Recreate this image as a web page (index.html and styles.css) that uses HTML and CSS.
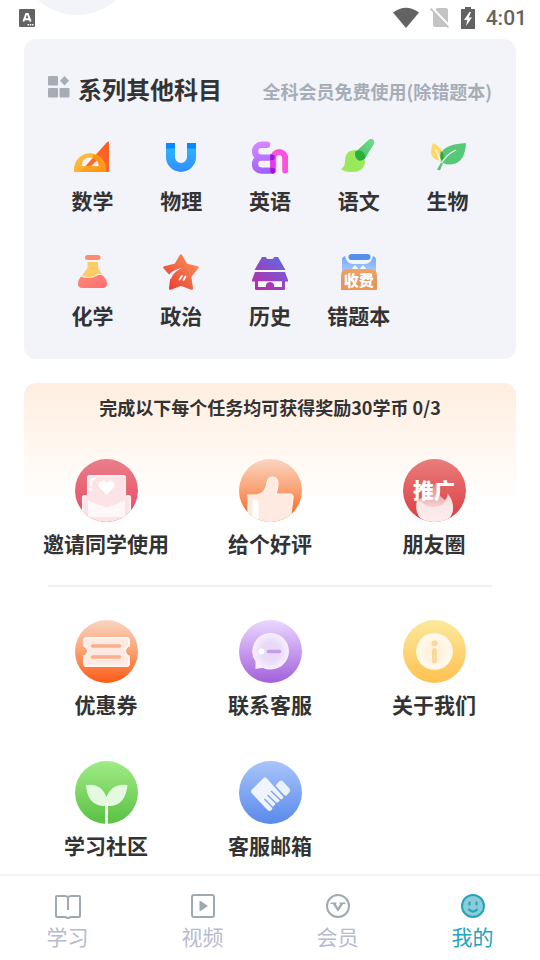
FILE: index.html
```html
<!DOCTYPE html>
<html lang="zh-CN">
<head>
    <meta charset="UTF-8">
    <meta name="viewport" content="width=device-width, initial-scale=1">
    <title>我的</title>
    <link rel="stylesheet" href="styles.css">
</head>
<body>
<div class="page">
    <div class="avatar"></div>
    <header class="status">
        <svg width="16" height="18" viewBox="0 0 16 18">
            <rect width="16" height="18" rx="1" fill="#636363"/>
            <path d="M4.4 12.5L7.2 5h1.6l2.8 7.5M5.7 10.2h4.6" fill="none" stroke="#fff" stroke-width="2"/>
            <path d="M8.500 15.700h6" stroke="#fff" stroke-width="1.500" stroke-dasharray="1.500 .8"/>
        </svg>
        <div class="status-right">
            <svg width="26" height="22" viewBox="0 0 26 22"><path d="M0 5.500Q13-4 26 5.500L13 21z" fill="#636363"/></svg>
            <svg width="20" height="22" viewBox="0 0 20 22">
                <path d="M7 1h9q2 0 2 2v15q0 2-2 2H5q-2 0-2-2V5z" fill="#c4c4c4"/>
                <path d="M2 .5l18 19" stroke="#fff" stroke-width="2"/>
                <path d="M.5 1.500l18 19" stroke="#c4c4c4" stroke-width="1.800"/>
            </svg>
            <svg width="14" height="22" viewBox="0 0 14 22">
                <path d="M4 0h6v2h4v20H0V2h4z" fill="#636363"/>
                <path d="M8.500 5L3 13h3.300L5 19l6-8.500H7.700L10 5z" fill="#fff"/>
            </svg>
            <span class="time">4:01</span>
        </div>
    </header>

    <section class="subjects">
        <div class="subjects-head">
            <svg width="22" height="22" viewBox="0 0 22 22" fill="#a6adb7">
                <rect width="10" height="9.500" rx="1"/>
                <rect y="12" width="10" height="9.500" rx="1"/>
                <rect x="11.500" y="12" width="10" height="9.500" rx="1"/>
                <path d="M16.500 0L21 4.700 16.500 9.500 12 4.700z"/>
            </svg>
            <h2>系列其他科目</h2>
            <p>全科会员免费使用(除错题本)</p>
        </div>
        <nav class="subject-list">
            <a href="#">
                <svg class="icon" viewBox="0 0 36 36">
                    <defs>
                        <linearGradient id="tri" x1="0" y1="1" x2="1" y2="0"><stop offset="0" stop-color="#ff7433"/><stop offset="1" stop-color="#ff5b20"/></linearGradient>
                        <linearGradient id="pro" x1="0" y1="0" x2="1" y2="1"><stop offset="0" stop-color="#ffc12e"/><stop offset="1" stop-color="#ff9513"/></linearGradient>
                    </defs>
                    <path d="M35 4v28q0 1-1 1H6L33 3.200q2-1.500 2 .8zM25 19.500L16 28h10z" fill="url(#tri)" fill-rule="evenodd"/>
                    <path d="M0 30q0-6 4.600-11a15.800 15.800 0 0 1 22.700 0Q32 24 32 30v2q0 1-1 1H1q-1 0-1-1zM7.500 27H25q-1-8.500-9-8.500T7.500 27z" fill="url(#pro)" fill-opacity=".92" fill-rule="evenodd"/>
                    <path d="M19 15.500q6 1 9 8.500l-3 3q0-6-6-8z" fill="#ff9212"/>
                </svg>
                <span>数学</span>
            </a>
            <a href="#">
                <svg class="icon" viewBox="0 0 36 36">
                    <defs><linearGradient id="mag" x1="0" y1="0" x2="0" y2="1"><stop offset="0" stop-color="#2bbcff"/><stop offset="1" stop-color="#338dff"/></linearGradient></defs>
                    <path d="M3 4h9v14a6 6 0 0 0 12 0V4h9v14a15 15 0 0 1-30 0z" fill="url(#mag)"/>
                    <path d="M3 4h9v5.500H3zM24 4h9v5.500h-9z" fill="#078aff"/>
                </svg>
                <span>物理</span>
            </a>
            <a href="#">
                <svg class="icon" viewBox="0 0 36 36">
                    <defs><linearGradient id="ee" gradientUnits="userSpaceOnUse" x1="8" y1="3" x2="16" y2="35"><stop offset="0" stop-color="#d78aff"/><stop offset="1" stop-color="#9c5cff"/></linearGradient></defs>
                    <path d="M15 5.800H9.500a6.200 6.200 0 0 0 0 12.800H19.500H9.500a6.500 6.500 0 0 0 0 13H19.500" fill="none" stroke="url(#ee)" stroke-width="6.400" stroke-linecap="round" stroke-linejoin="round"/>
                    <path d="M21.200 31.500V19a6 6 0 0 1 12 0v12.500" fill="none" stroke="#ff52dc" stroke-width="6" stroke-linecap="round"/>
                    <path d="M18.200 15.500h1.600q3 0 3 3t-3 3h-1.600zM18.200 28.500h2q3 0 3 3t-3 3.200q-2-1-2-3z" fill="#9517e0"/>
                    <path d="M18.200 21.500h5v7h-5z" fill="#dc3df0"/>
                </svg>
                <span>英语</span>
            </a>
            <a href="#">
                <svg class="icon" viewBox="0 0 36 36">
                    <defs><linearGradient id="pen" x1="1" y1="0" x2="0" y2="1"><stop offset="0" stop-color="#71dd8c"/><stop offset="1" stop-color="#48bd6c"/></linearGradient></defs>
                    <path d="M0 30Q4 28 4 22q0-11 11-11 9 3 9 12-1 10-13 10-8 0-11-3z" fill="#9be85c"/>
                    <path d="M14.500 13L27.500 1q2-1.500 4.500-.8 2 1.500.8 5L24 19.500q-3 3-7 1.500-4-3-2.500-8z" fill="url(#pen)"/>
                    <path d="M14.500 12.500q5-2.500 8 1 2.500 3 1.500 6-3 3-7 1.500-4-3-2.500-8.500z" fill="#2bae3c"/>
                </svg>
                <span>语文</span>
            </a>
            <a href="#">
                <svg class="icon" viewBox="0 0 36 36">
                    <path d="M3 4q10 5 10 13l-3 5Q1 20 1 13q0-4 2-9z" fill="#ffd866"/>
                    <path d="M36 4q-1 21-16 21.500-4 0-7-1.500l-3 7.500-3-1 4-7q-5-18 25-19.500z" fill="#57c878"/>
                    <path d="M11 12q3 2 2.500 8l-2 1q-2-4-.5-9z" fill="#28a72d"/>
                    <path d="M26 11q-9 4-14.500 13M5.500 11q3 4 4.500 11" fill="none" stroke="#f3f4f9" stroke-width="1.300"/>
                </svg>
                <span>生物</span>
            </a>
            <a href="#">
                <svg class="icon" viewBox="0 0 36 36">
                    <defs><linearGradient id="fl" x1="0" y1="0" x2="1" y2="1"><stop offset="0" stop-color="#ff8d75"/><stop offset="1" stop-color="#ff6b70"/></linearGradient></defs>
                    <rect x="11" y="1" width="15.500" height="5" rx="2.500" fill="#ff8c72"/>
                    <path d="M13.500 8h10.500v6l4 6q-4-1-8 2t-12-.5l5.500-7.500z" fill="#ffcb69"/>
                    <path d="M7 22.500q8 3 14 0 5-3 8-.8 4 4 4 8 0 4.300-4.500 4.300h-20Q4 34 4 29.500q0-4 3-7z" fill="url(#fl)"/>
                </svg>
                <span>化学</span>
            </a>
            <a href="#">
                <svg class="icon" viewBox="0 0 36 36">
                    <defs><linearGradient id="st" x1="1" y1="0" x2="0" y2="1"><stop offset="0" stop-color="#f99a5c"/><stop offset="1" stop-color="#ea3730"/></linearGradient></defs>
                    <path d="M18 1.500l5.300 9.300 11.200 2.700-7.500 9 1.800 12L18 30.500 7.200 34.500 8.800 22 1.500 13.500l11-2.700z" fill="url(#st)" stroke="url(#st)" stroke-width="2.500" stroke-linejoin="round"/>
                    <path d="M4 22.500q6-7.500 15-8.500-8.500 3.500-11 11z" fill="#f3f4f9"/>
                    <path d="M19 22l-2.500 3.500M22.500 22.500L20.500 26" stroke="#fff" stroke-width="1.800" stroke-linecap="round"/>
                </svg>
                <span>政治</span>
            </a>
            <a href="#">
                <svg class="icon" viewBox="0 0 36 36">
                    <defs><linearGradient id="ho" gradientUnits="userSpaceOnUse" x1="30" y1="2" x2="8" y2="36"><stop offset="0" stop-color="#5d6be3"/><stop offset="1" stop-color="#bd2ba8"/></linearGradient></defs>
                    <path d="M10 3h4q0 2 2 2h4q2 0 2-2h4l7.500 13h-31zM3 18h30l3 8v1.500H33V35q0 1-1 1H4q-1 0-1-1v-7.500H0V26zM6 27.500v5.500h7.500q0-5 4.500-5t4.500 5H30v-5.500z" fill="url(#ho)" fill-rule="evenodd"/>
                    <path d="M8 17.200h20" stroke="#fff" stroke-width="1.200"/>
                    <path d="M6 27.500h24V33h-7.500q0-5-4.500-5t-4.500 5H6z" fill="#f7f7fb"/>
                </svg>
                <span>历史</span>
            </a>
            <a href="#">
                <div class="paid">
                    <svg class="icon" viewBox="0 0 36 36">
                        <defs>
                            <linearGradient id="cb" x1="0" y1="0" x2="0" y2="1"><stop offset="0" stop-color="#73a8fb"/><stop offset="1" stop-color="#bcd4ff"/></linearGradient>
                            <linearGradient id="fee" x1="0" y1="0" x2="0" y2="1"><stop offset="0" stop-color="#f3a15e"/><stop offset=".5" stop-color="#e19a65"/><stop offset="1" stop-color="#ed954e"/></linearGradient>
                        </defs>
                        <path d="M1 5q0-2 3-3 2 8 8 8h12q6 0 8-8 3 1 3 3v19H1z" fill="url(#cb)"/>
                        <rect x="7.500" y="0" width="22" height="6" rx="3" fill="#5491eb"/>
                        <path d="M12 16l2-2.500 2 2.500M20 16l2-2.500 2 2.500" stroke="#fff" stroke-width="3" fill="none"/>
                        <path d="M0 36V22q0-7 7-7h22q7 0 7 7v14z" fill="url(#fee)"/>
                    </svg>
                    <b>收费</b>
                </div>
                <span>错题本</span>
            </a>
        </nav>
    </section>

    <main class="tasks">
        <p class="reward">完成以下每个任务均可获得奖励30学币 0/3</p>
        <div class="task-list">
            <a href="#">
                <svg class="badge" viewBox="0 0 63 63">
                    <defs>
                        <linearGradient id="g1" x1="0" y1="0" x2="0" y2="1"><stop offset="0" stop-color="#e97f8b"/><stop offset="1" stop-color="#e94560"/></linearGradient>
                        <clipPath id="round"><circle cx="31.500" cy="31.500" r="31.500"/></clipPath>
                    </defs>
                    <g clip-path="url(#round)">
                        <rect width="63" height="63" fill="url(#g1)"/>
                        <path d="M12 36V19q0-3 3-3h33q3 0 3 3v17h2q3 0 3 3v24H7V39q0-3 3-3z" fill="#fbe3e6"/>
                        <path d="M12.700 36V19q0-2.300 2.500-2.300h32.600q2.500 0 2.500 2.300v17M7.700 62V39q0-2.300 2.300-2.300h2.500M50.500 36.700h2.500q2.300 0 2.300 2.300v24" fill="none" stroke="#fff2f4" stroke-width="1.500"/>
                        <path d="M16 26v-3q0-3.500 4-3.500" fill="none" stroke="#fff" stroke-width="2" stroke-linecap="round"/>
                        <circle cx="16" cy="30.500" r="1.400" fill="#fff"/>
                        <path d="M31.600 35.500L25 29q-3-3.500 0-6.200 3.500-2.300 6.600.8 3-3.100 6.600-.8 3 2.700 0 6.200z" fill="#fff"/>
                        <path d="M13 41.500q9 4 18.600 7 9.500-3 18.400-7V58H13z" fill="#fff7f8"/>
                    </g>
                </svg>
                <span>邀请同学使用</span>
            </a>
            <a href="#">
                <svg class="badge" viewBox="0 0 63 63">
                    <defs><linearGradient id="g2" x1="0" y1="0" x2="0" y2="1"><stop offset="0" stop-color="#f9d5c2"/><stop offset=".45" stop-color="#fba67a"/><stop offset="1" stop-color="#fa5b13"/></linearGradient></defs>
                    <g clip-path="url(#round)">
                        <rect width="63" height="63" fill="url(#g2)"/>
                        <path d="M9 36h9q9-2 10-12 .5-6 5.500-6 5.500 0 5.500 7-.5 6-2 10h14q3.500 0 3 4l-3 24H9z" fill="#feeae1" stroke="#fff7f3" stroke-width="1.200"/>
                        <rect x="13.500" y="41" width="6" height="24" rx="2" fill="#fff"/>
                    </g>
                </svg>
                <span>给个好评</span>
            </a>
            <a href="#">
                <div class="promo">
                    <svg class="badge" viewBox="0 0 63 63">
                        <defs>
                            <linearGradient id="g3" x1="0" y1="0" x2="0" y2="1"><stop offset="0" stop-color="#e97d7c"/><stop offset="1" stop-color="#dc3c40"/></linearGradient>
                            <linearGradient id="fire" x1="0" y1="0" x2="0" y2="1"><stop offset="0" stop-color="#e77c7c"/><stop offset=".65" stop-color="#f5d5d6"/><stop offset="1" stop-color="#ffeeee"/></linearGradient>
                        </defs>
                        <g clip-path="url(#round)">
                            <rect width="63" height="63" fill="url(#g3)"/>
                            <path d="M14 41q8-3 13-9 4-4 6-9 4 6 4 14l5 4q3-3 2.500-7 5.500 6 5.500 15 0 14-18 14T13 48q0-4 1-7z" fill="url(#fire)"/>
                            <path d="M14 43q3-3 8 3 12 6 21-4l2-6q5 6 5 13 0 14-18 14T14 50z" fill="#fbecec" fill-opacity=".8"/>
                        </g>
                    </svg>
                    <b>推广</b>
                </div>
                <span>朋友圈</span>
            </a>
        </div>
        <hr>
        <div class="task-list">
            <a href="#">
                <svg class="badge" viewBox="0 0 63 63">
                    <circle cx="31.500" cy="31.500" r="31.500" fill="url(#g2)"/>
                    <path d="M12 17h39q4 0 4 4v5q-4 1.500-4 5t4 5v7q0 4-4 4H12q-4 0-4-4v-7q4-1.500 4-5t-4-5v-5q0-4 4-4z" fill="#feeae2"/>
                    <path d="M12 18h39q3 0 3 3v4.500q-4 1.500-4 5.500t4 5.500V43q0 3-3 3H12q-3 0-3-3v-6.500q4-1.500 4-5.500t-4-5.500V21q0-3 3-3z" fill="none" stroke="#fff6f2" stroke-width="2"/>
                    <path d="M17.500 26h27M17.500 37h27" stroke="#faae8c" stroke-width="3.600" stroke-linecap="round"/>
                </svg>
                <span>优惠券</span>
            </a>
            <a href="#">
                <svg class="badge" viewBox="0 0 63 63">
                    <defs>
                        <linearGradient id="g4" x1="0" y1="0" x2="0" y2="1"><stop offset="0" stop-color="#ead8ff"/><stop offset="1" stop-color="#a260dc"/></linearGradient>
                        <radialGradient id="talk"><stop offset=".5" stop-color="#e9d9f8"/><stop offset="1" stop-color="#f8f0ff"/></radialGradient>
                    </defs>
                    <circle cx="31.500" cy="31.500" r="31.500" fill="url(#g4)"/>
                    <path d="M31.500 13a18.300 18.300 0 1 1-8 34.700L16.500 49v-7.500A18.300 18.300 0 0 1 31.500 13z" fill="url(#talk)"/>
                    <circle cx="22.500" cy="31.500" r="3" fill="#fff"/>
                    <path d="M29.500 31.500h11" stroke="#c69bea" stroke-width="3.500" stroke-linecap="round"/>
                </svg>
                <span>联系客服</span>
            </a>
            <a href="#">
                <svg class="badge" viewBox="0 0 63 63">
                    <defs>
                        <linearGradient id="g5" x1="0" y1="0" x2="0" y2="1"><stop offset="0" stop-color="#fce99d"/><stop offset="1" stop-color="#ffc14f"/></linearGradient>
                        <radialGradient id="info"><stop offset=".2" stop-color="#fff0d8"/><stop offset="1" stop-color="#fffaf0"/></radialGradient>
                    </defs>
                    <circle cx="31.500" cy="31.500" r="31.500" fill="url(#g5)"/>
                    <circle cx="31.500" cy="31.500" r="18.300" fill="url(#info)"/>
                    <circle cx="31.500" cy="23.300" r="3" fill="#f8d99c"/>
                    <path d="M31.500 30.500v10.500" stroke="#f8d99c" stroke-width="5" stroke-linecap="round"/>
                </svg>
                <span>关于我们</span>
            </a>
            <a href="#">
                <svg class="badge" viewBox="0 0 63 63">
                    <defs><linearGradient id="g6" x1="0" y1="0" x2="0" y2="1"><stop offset="0" stop-color="#a0ec85"/><stop offset="1" stop-color="#5ac043"/></linearGradient></defs>
                    <g clip-path="url(#round)">
                        <rect width="63" height="63" fill="url(#g6)"/>
                        <path d="M11 24q15-2 20.500 12Q37 22 52.500 24q-2 20-17 21h-8Q12 43 11 24z" fill="#e4f9df"/>
                        <path d="M31.500 42v21" stroke="#f7fdf5" stroke-width="3"/>
                    </g>
                </svg>
                <span>学习社区</span>
            </a>
            <a href="#">
                <svg class="badge" viewBox="0 0 63 63">
                    <defs><linearGradient id="g7" x1="0" y1="0" x2="0" y2="1"><stop offset="0" stop-color="#a9c5fa"/><stop offset="1" stop-color="#5989ea"/></linearGradient></defs>
                    <circle cx="31.500" cy="31.500" r="31.500" fill="url(#g7)"/>
                    <path d="M24.500 17q1.500-1.500 3 0l16 18q1.500 1.500 0 3l-2.500.5q0 2-2.500 3l-2 .5q0 2-2 3l-2 4q-2 2-4 0L12.500 32q-1-1.500 0-3z" fill="#eff4ff"/>
                    <path d="M36.500 24.500l4-4.500q1.500-1 3 0l7 7.500q1.500 2 0 3.500l-3 3.500q-1.500.5-3-1z" fill="#eaf1ff"/>
                    <path d="M32 30l12 11.500M28.500 34l12 11.500M25.500 38L36 49" stroke="#7ba1f0" stroke-width="1.400"/>
                </svg>
                <span>客服邮箱</span>
            </a>
        </div>
    </main>

    <nav class="tabbar">
        <a href="#">
            <svg viewBox="0 0 28 28" fill="none" stroke="#9faab0" stroke-width="2">
                <path d="M14 5.500q-1-1.500-3-1.500H3q-1 0-1 1v19q0 1 1 1h8.500q1 1 2.500 1t2.500-1H25q1 0 1-1V5q0-1-1-1h-8q-2 0-3 1.500V18"/>
            </svg>
            <span>学习</span>
        </a>
        <a href="#">
            <svg viewBox="0 0 28 28">
                <rect x="3" y="3" width="22" height="22" rx="2" fill="none" stroke="#9faab0" stroke-width="2"/>
                <path d="M10.500 9.500q0-1 1-.5l7.500 5-7.500 5q-1 .5-1-.5z" fill="#9faab0"/>
            </svg>
            <span>视频</span>
        </a>
        <a href="#">
            <svg viewBox="0 0 28 28">
                <circle cx="14" cy="14" r="11" fill="none" stroke="#9faab0" stroke-width="2"/>
                <path d="M6.500 10.500h6v1.300l-.8.3 2.300 3.700 2.300-3.700-.8-.3v-1.300h6V12h-2.300L14 19.800 8.800 12H6.500z" fill="#9faab0"/>
            </svg>
            <span>会员</span>
        </a>
        <a href="#" class="current">
            <svg viewBox="0 0 28 28" stroke="#24a3bd" stroke-width="2" stroke-linecap="round">
                <circle cx="14" cy="14" r="11" fill="#8bccd8"/>
                <path d="M10.500 10.500v2M17.500 10.500v2M10 17.500q4 4 8 0" fill="none" stroke-width="2.200"/>
            </svg>
            <span>我的</span>
        </a>
    </nav>
</div>
</body>
</html>
```

FILE: styles.css
```css
* {
    padding: 0;
    margin: 0;
    box-sizing: border-box;
}

body {
    font-family: "Noto Sans CJK SC", sans-serif;
    color: #333;
    background: #fff;
}

a {
    color: inherit;
    text-decoration: none;
}

svg {
    display: block;
    flex: none;
}

.page {
    position: relative;
    display: flex;
    flex-direction: column;
    min-height: 100vh;
    overflow: hidden;
}

/*头像滚动到状态栏下面*/
.avatar {
    position: absolute;
    left: 19px;
    top: -101px;
    width: 116px;
    height: 116px;
    border-radius: 50%;
    background: #f3f4f9;
}

.status {
    position: relative;
    display: flex;
    align-items: center;
    justify-content: space-between;
    height: 36px;
    padding: 0 13px 0 19px;
}

.status-right {
    display: flex;
    align-items: center;
    gap: 11px;
}

.time {
    font-family: Roboto, sans-serif;
    font-size: 21px;
    font-weight: 500;
    line-height: 36px;
    color: #636363;
}

.subjects {
    margin: 3px 24px 24px;
    padding: 32px 24px 28px;
    border-radius: 12px;
    background: #f3f4f9;
}

.subjects-head {
    display: flex;
    align-items: baseline;
    gap: 8px;
    height: 36px;
    margin-bottom: 32px;
}

.subjects-head svg {
    align-self: center;
    margin-bottom: 4px;
}

.subjects-head h2 {
    font-size: 24px;
    line-height: 36px;
}

.subjects-head p {
    margin-left: auto;
    font-size: 18px;
    font-weight: bold;
    line-height: 36px;
    color: #a6adb7;
    white-space: nowrap;
}

.subject-list {
    display: grid;
    grid-template-columns: repeat(5, 1fr);
    row-gap: 38px;
}

.subject-list a,
.task-list a {
    display: flex;
    flex-direction: column;
    align-items: center;
    font-size: 21px;
    font-weight: bold;
    line-height: 32px;
    white-space: nowrap;
}

.subject-list a {
    gap: 9px;
}

.icon {
    width: 36px;
    height: 36px;
}

.paid,
.promo {
    position: relative;
}

.paid b,
.promo b {
    position: absolute;
    left: 0;
    right: 0;
    color: #fff;
    text-align: center;
}

.paid b {
    bottom: 0;
    font-size: 15px;
    line-height: 21px;
}

.promo b {
    top: 14px;
    font-size: 21px;
    line-height: 32px;
}

.tasks {
    flex: 1;
    margin: 0 24px;
    padding: 12px 0;
    border-radius: 12px;
    background: linear-gradient(#ffeee0, #fff 120px);
}

.reward {
    margin-bottom: 40px;
    font-size: 18px;
    font-weight: bold;
    line-height: 24px;
    text-align: center;
}

.task-list {
    display: grid;
    grid-template-columns: repeat(3, 1fr);
    row-gap: 41px;
}

.task-list a {
    gap: 5px;
}

.badge {
    width: 63px;
    height: 63px;
}

.tasks hr {
    height: 2px;
    margin: 26px 24px 33px;
    border: 0;
    background: #f1f1f1;
}

.tabbar {
    display: grid;
    grid-template-columns: repeat(4, 1fr);
    padding: 16px 0 8px;
    border-top: 2px solid #f3f3f3;
    background: #fff;
}

.tabbar a {
    display: flex;
    flex-direction: column;
    align-items: center;
    font-size: 21px;
    line-height: 32px;
    color: #b8bbd0;
}

.tabbar svg {
    width: 28px;
    height: 28px;
}

.tabbar .current {
    color: #24a3bd;
}
```
